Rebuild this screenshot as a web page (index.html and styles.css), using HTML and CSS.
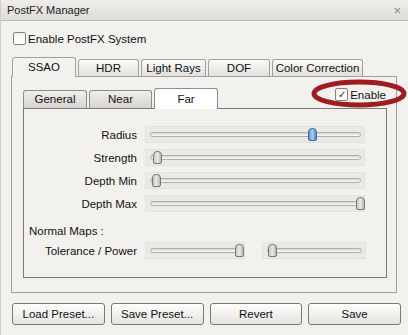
FILE: index.html
```html
<!DOCTYPE html>
<html lang="en">
<head>
    <meta charset="UTF-8">
    <title>PostFX Manager</title>
    <link rel="stylesheet" href="styles.css">
</head>
<body>
    <div class="window">
        <div class="titlebar">
            <span>PostFX Manager</span>
            <span class="close">&#215;</span>
        </div>

        <div class="content">
            <label class="check sys-check"><span class="box"></span>Enable PostFX System</label>

            <div class="tabbar">
                <div class="tab active" style="width:64px">SSAO</div>
                <div class="tab" style="width:61px">HDR</div>
                <div class="tab" style="width:65px">Light Rays</div>
                <div class="tab" style="width:62px">DOF</div>
                <div class="tab" style="width:91px">Color Correction</div>
            </div>

            <div class="pane">
                <div class="subbar">
                    <div class="subtabs">
                        <div class="subtab" style="width:64px">General</div>
                        <div class="subtab" style="width:63px">Near</div>
                        <div class="subtab active" style="width:64px">Far</div>
                    </div>
                    <label class="check enable"><span class="box checked">&#10003;</span>Enable</label>
                </div>

                <div class="subpane">
                    <div class="row">
                        <span class="label">Radius</span>
                        <div class="slider"><div class="track"></div><div class="handle blue" style="left:162px"></div></div>
                    </div>
                    <div class="row">
                        <span class="label">Strength</span>
                        <div class="slider"><div class="track"></div><div class="handle" style="left:7px"></div></div>
                    </div>
                    <div class="row">
                        <span class="label">Depth Min</span>
                        <div class="slider"><div class="track"></div><div class="handle" style="left:6px"></div></div>
                    </div>
                    <div class="row">
                        <span class="label">Depth Max</span>
                        <div class="slider"><div class="track"></div><div class="handle" style="left:210px"></div></div>
                    </div>

                    <div class="section">Normal Maps :</div>
                    <div class="row">
                        <span class="label">Tolerance / Power</span>
                        <div class="slider small"><div class="track"></div><div class="handle" style="left:89px"></div></div>
                        <div class="slider small second"><div class="track"></div><div class="handle" style="left:5px"></div></div>
                    </div>
                </div>
            </div>

            <div class="buttons">
                <button type="button">Load Preset...</button>
                <button type="button">Save Preset...</button>
                <button type="button">Revert</button>
                <button type="button">Save</button>
            </div>
        </div>

        <!-- annotation ring around the Enable box -->
        <svg class="ring" width="100" height="32" viewBox="0 0 100 32">
            <ellipse cx="50" cy="15.5" rx="45" ry="11.5" fill="none" stroke="#9f1d20" stroke-width="5"/>
        </svg>
    </div>
</body>
</html>
```

FILE: styles.css
```css
* {
    box-sizing: border-box;
}
body {
    margin: 0;
    font-family: "Liberation Sans", Arial, sans-serif;
    font-size: 11px;
    color: #111;
    background-color: #f3f1ee;
}
.window {
    position: relative;
    width: 408px;
    height: 335px;
    border-left: 1px solid #cfccc8;
    background-color: #f3f1ee;
    overflow: hidden;
}
.titlebar {
    display: flex;
    justify-content: space-between;
    align-items: center;
    height: 21px;
    padding: 0 7px 0 6px;
    border-bottom: 1px solid #bdbab6;
    background: linear-gradient(#efedea, #dedcd8);
    color: #222;
}
.titlebar .close {
    color: #8a8884;
    font-size: 13px;
}
.content {
    padding: 0 10px 0 10px;
}
.check {
    display: flex;
    align-items: center;
}
.box {
    display: inline-block;
    width: 13px;
    height: 13px;
    border: 1px solid #85827e;
    border-radius: 2px;
    background: linear-gradient(#f4f4f4, #ffffff);
    margin-right: 2px;
    font-size: 10px;
    line-height: 11px;
    text-align: center;
    color: #333;
}
.sys-check {
    margin: 11px 0 0 2px;
    height: 13px;
    font-size: 11.5px;
}
.tabbar {
    display: flex;
    align-items: flex-end;
    gap: 2px;
    height: 19px;
    margin-top: 12px;
    padding-left: 1px;
}
.tab {
    height: 17px;
    line-height: 16px;
    text-align: center;
    border: 1px solid #a3a09c;
    border-bottom: none;
    border-radius: 3px 3px 0 0;
    background: linear-gradient(#fbfbfa, #e2e0dc);
    font-size: 11.5px;
}
.tab.active {
    height: 20px;
    line-height: 19px;
    margin-bottom: -1px;
    position: relative;
    background: #f4f2ef;
}
.pane {
    border: 1px solid #a3a09c;
    height: 217px;
    margin-right: 1px;
    padding: 11px 9px 0 11px;
}
.subbar {
    display: flex;
    justify-content: space-between;
    align-items: flex-start;
    height: 20px;
}
.subtabs {
    display: flex;
    align-items: flex-end;
    gap: 2px;
    height: 20px;
}
.subtab {
    height: 18px;
    line-height: 17px;
    text-align: center;
    border: 1px solid #8f8c88;
    border-bottom: none;
    border-radius: 3px 3px 0 0;
    background: linear-gradient(#efeeec, #d6d4d0);
    font-size: 11.5px;
}
.subtab.active {
    height: 21px;
    line-height: 20px;
    margin-bottom: -1px;
    position: relative;
    background: #ffffff;
}
.enable {
    margin-right: 1px;
    font-size: 11.5px;
}
.subpane {
    border: 1px solid #7e7b77;
    height: 170px;
    padding: 14px 0 0 0;
}
.row {
    display: flex;
    align-items: center;
    height: 23px;
}
.label {
    width: 113px;
    text-align: right;
    margin-right: 8px;
    font-size: 11.5px;
}
.section {
    height: 16px;
    line-height: 16px;
    margin-top: 8px;
    padding-left: 5px;
    font-size: 11.5px;
}
.slider {
    position: relative;
    width: 220px;
    height: 17px;
    border: 1px solid #e4e2df;
    background-color: #ebe9e6;
    display: flex;
    align-items: center;
}
.slider.small {
    width: 100px;
}
.slider.second {
    width: 104px;
    margin-left: 17px;
}
.track {
    flex: 1;
    height: 5px;
    margin: 0 3px 0 4px;
    border: 1px solid #b1aeaa;
    border-radius: 3px;
    background: linear-gradient(#d8d6d3, #fbfbfa);
}
.handle {
    position: absolute;
    top: 1px;
    width: 9px;
    height: 13px;
    border: 1px solid #7b7874;
    border-radius: 4px 4px 2px 2px;
    background: linear-gradient(90deg, #c9c7c4, #e9e8e6 50%, #b9b7b4);
}
.handle.blue {
    border-color: #3c6fa6;
    background: linear-gradient(90deg, #5f97d4, #a8cdf2 50%, #4e86c6);
}
.buttons {
    display: flex;
    gap: 6px;
    margin: 10px -3px 0 1px;
}
.buttons button {
    flex: 1;
    height: 22px;
    font-family: "Liberation Sans", Arial, sans-serif;
    font-size: 11.5px;
    color: #111;
    border: 1px solid #7c7975;
    border-radius: 3px;
    background: linear-gradient(#fdfdfc, #e5e3df);
}
.ring {
    position: absolute;
    left: 308px;
    top: 78px;
}
```
